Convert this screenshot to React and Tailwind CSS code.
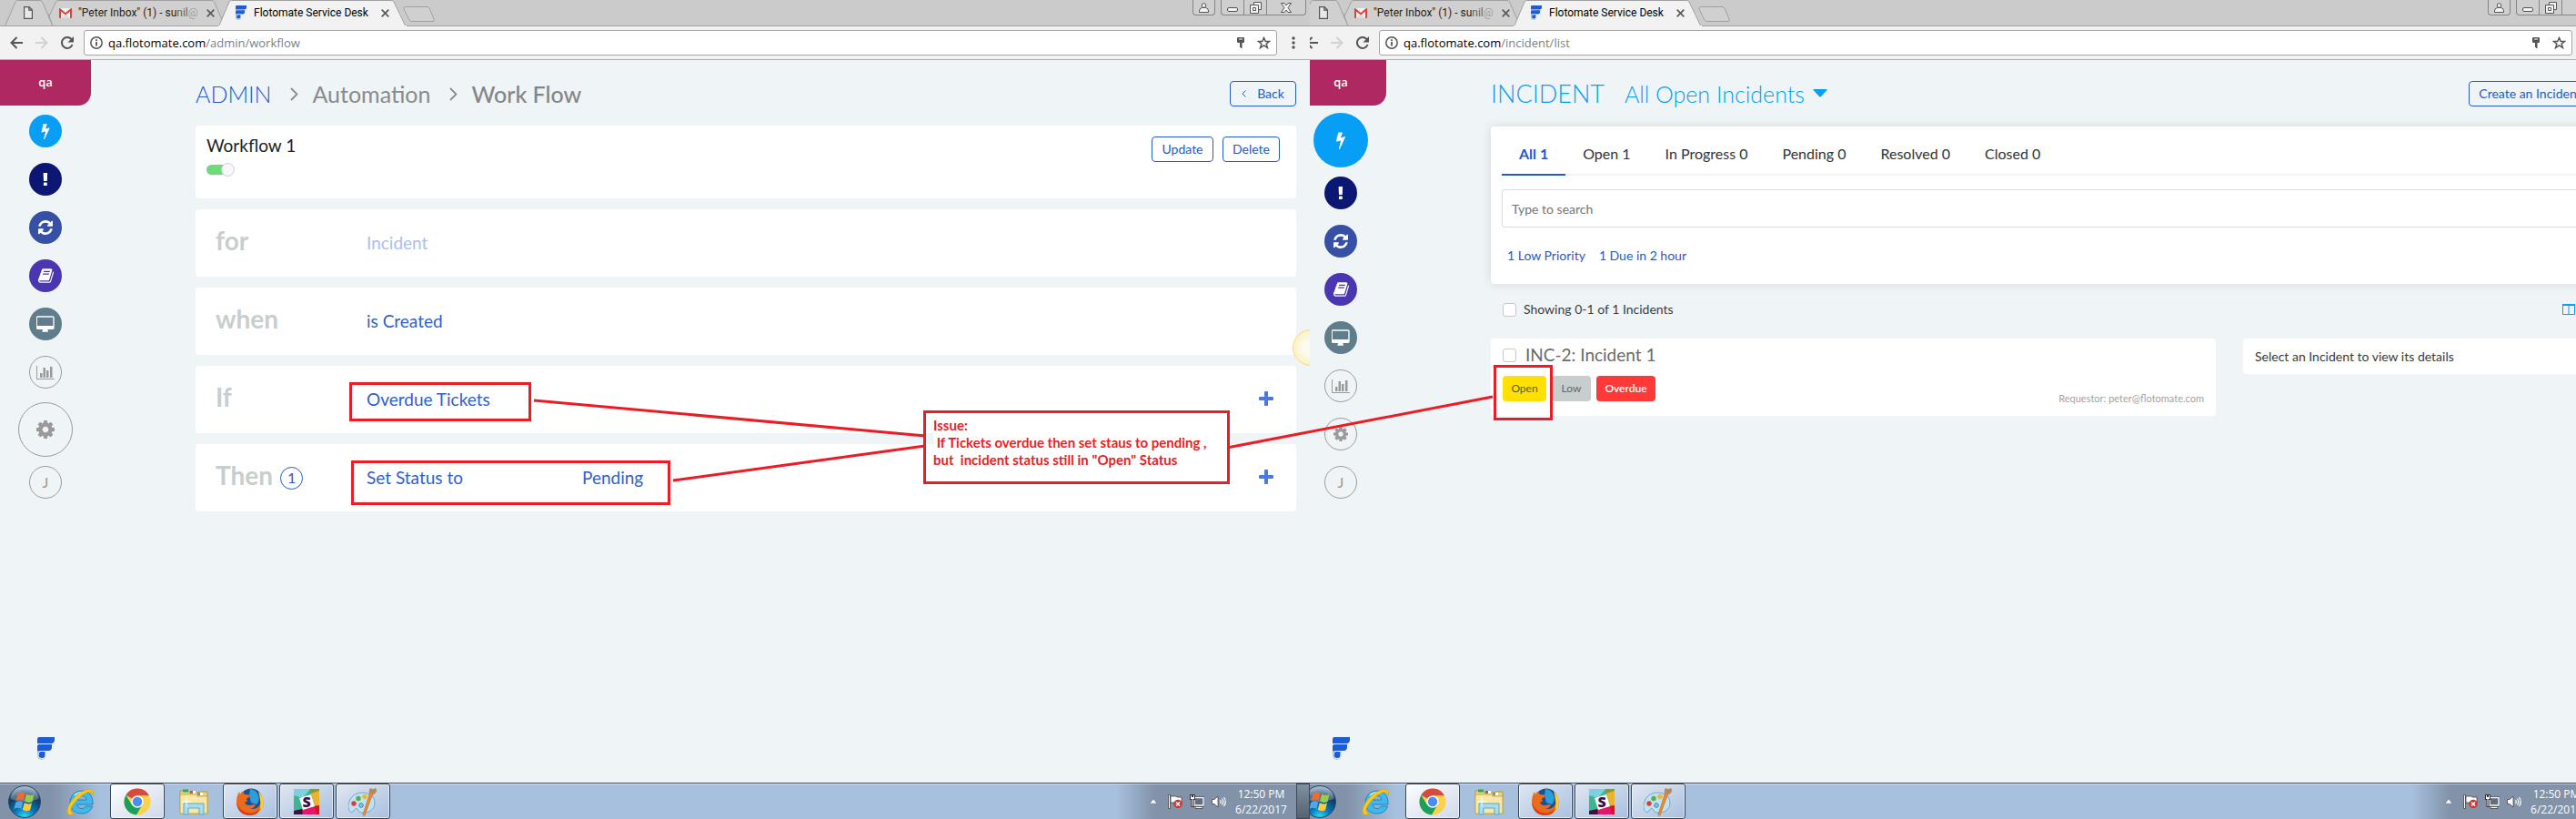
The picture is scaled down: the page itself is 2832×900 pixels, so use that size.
import React from "react";

const glyphs = {
  bolt: {
    box: "0 0 896 1792",
    d: "M885 566q18 20 7 44l-540 1157q-13 25-42 25-4 0-14-2-17-5-25.5-19t-4.5-30l197-808-406 101q-4 1-12 1-18 0-31-11-18-15-13-39l201-825q4-16 14.5-26t24.5-10h328q19 0 32 12.5t13 29.5q0 8-5 18l-171 463 396-98q8-2 12-2 19 0 34 15z",
  },
  alert: {
    box: "0 0 640 1792",
    d: "M448 1312v224q0 26-19 45t-45 19h-256q-26 0-45-19t-19-45v-224q0-26 19-45t45-19h256q26 0 45 19t19 45zm30-1056l-28 768q-1 26-20.500 45t-45.500 19h-256q-26 0-45.500-19t-20.500-45l-28-768q-1-26 17.500-45t44.500-19h320q26 0 44.500 19t17.500 45z",
  },
  refresh: {
    box: "0 128 1536 1536",
    d: "M1511 1056q0 5-1 7-64 268-268 434.5t-478 166.5q-146 0-282.500-55t-243.500-157l-129 129q-19 19-45 19t-45-19-19-45v-448q0-26 19-45t45-19h448q26 0 45 19t19 45-19 45l-137 137q71 66 161 102t187 36q134 0 250-65t186-179q11-17 53-117 8-23 30-23h192q13 0 22.500 9.500t9.500 22.500zm25-800v448q0 26-19 45t-45 19h-448q-26 0-45-19t-19-45 19-45l138-138q-148-137-349-137-134 0-250 65t-186 179q-11 17-53 117-8 23-30 23h-199q-13 0-22.500-9.500t-9.500-22.500v-7q65-268 270-434.500t480-166.500q146 0 284 55.500t245 156.500l130-129q19-19 45-19t45 19 19 45z",
  },
  book: {
    box: "0 128 1664 1536",
    d: "M1639 478q40 57 18 129l-275 906q-19 64-76.500 107.500t-122.500 43.500h-923q-77 0-148.500-53.500t-99.500-131.500q-24-67-2-127 0-4 3-27t4-37q1-8-3-21.500t-3-19.500q2-11 8-21t16.500-23.500 16.500-23.500q23-38 45-91.500t30-91.500q3-10 .5-30t-.5-28q3-11 17-28t17-23q21-36 42-92t25-90q1-9-2.500-32t.5-28q4-13 22-30.500t22-22.500q19-26 42.500-84.500t27.500-96.500q1-8-3-25.500t-2-26.500q2-8 9-18t18-23 17-21q8-12 16.500-30.500t15-35 16-36 19.500-32 26.500-23.500 36-11.500 47.500 5.500l-1 3q38-9 51-9h761q74 0 114 56t18 130l-274 906q-36 119-71.500 153.500t-128.500 34.500h-869q-27 0-38 15-11 16-1 43 24 70 144 70h923q29 0 56-15.500t35-41.500l300-987q7-22 5-57 38 15 59 43zm-1064 2q-4 13 2 22.500t20 9.500h608q13 0 25.500-9.500t16.500-22.500l21-64q4-13-2-22.500t-20-9.500h-608q-13 0-25.500 9.500t-16.500 22.500zm-83 256q-4 13 2 22.500t20 9.500h608q13 0 25.500-9.500t16.500-22.500l21-64q4-13-2-22.500t-20-9.500h-608q-13 0-25.500 9.500t-16.500 22.500z",
  },
  desktop: {
    box: "-32 0 1920 1664",
    d: "M1728 992v-832q0-13-9.500-22.500t-22.500-9.500h-1600q-13 0-22.500 9.500t-9.500 22.500v832q0 13 9.500 22.500t22.500 9.500h1600q13 0 22.500-9.500t9.500-22.500zm128-832v1088q0 66-47 113t-113 47h-544q0 37 16 77.500t32 71 16 43.500q0 26-19 45t-45 19h-512q-26 0-45-19t-19-45q0-14 16-44t32-70 16-78h-544q-66 0-113-47t-47-113v-1088q0-66 47-113t113-47h1600q66 0 113 47t47 113z",
  },
  chart: {
    box: "0 0 20 15",
    d: "M0 0h1v14h19v1H0zM4 8h2.500v5H4zM7.500 2H10v11H7.500zM11 5h2.500v8H11zM15 1h2.500v12H15z",
  },
  gear: {
    box: "0 128 1536 1536",
    d: "M1024 896q0-106-75-181t-181-75-181 75-75 181 75 181 181 75 181-75 75-181zm512-109v222q0 12-8 23t-20 13l-185 28q-19 54-39 91 35 50 107 138 10 12 10 25t-9 23q-27 37-99 108t-94 71q-12 0-26-9l-138-108q-44 23-91 38-16 136-29 186-7 28-36 28h-222q-14 0-24.500-8.500t-11.500-21.500l-28-184q-49-16-90-37l-141 107q-10 9-25 9-14 0-25-11-126-114-165-168-7-10-7-23 0-12 8-23 15-21 51-66.500t54-70.500q-27-50-41-99l-183-27q-13-2-21-12.500t-8-23.500v-222q0-12 8-23t19-13l186-28q14-46 39-92-40-57-107-138-10-12-10-24 0-10 9-23 26-36 98.500-107.500t94.500-71.500q13 0 26 10l138 107q44-23 91-38 16-136 29-186 7-28 36-28h222q14 0 24.500 8.500t11.500 21.500l28 184q49 16 90 37l142-107q9-9 24-9 13 0 25 10 129 119 165 170 7 8 7 22 0 12-8 23-15 21-51 66.500t-54 70.500q26 50 41 98l183 28q13 2 21 12.500t8 23.500z",
  },
};

function Glyph({ name, className }) {
  const g = glyphs[name];
  return (
    <svg viewBox={g.box} fill="currentColor" className={className} aria-hidden="true">
      <path d={g.d} />
    </svg>
  );
}

const Gmail = () => (
  <svg viewBox="0 0 14 11" className="h-[11px] w-[14px] shrink-0">
    <path d="M1 0h12v11H1z" fill="#f1f1f1" />
    <path d="M2 11l5-5 5 5z" fill="#dcdcdc" />
    <path d="M0 1q0-1 1-1l6 5 6-5q1 0 1 1v9q0 1-1 1h-1V3.500L7 7.500 2 3.500V11H1q-1 0-1-1z" fill="#db4437" />
  </svg>
);

const FlotoMark = ({ className }) => (
  <svg viewBox="0 0 19 25" className={className}>
    <path d="M2 0h17v3q0 4-4 4H0V2q0-2 2-2z" fill="#1f5bd6" />
    <path d="M2 8h14v3q0 4-4 4H0v-5q0-2 2-2z" fill="#1f5bd6" />
    <path d="M0 15h9.500v5a4.700 4.700 0 0 1-9.500 0z" fill="#8fadea" />
    <path d="M5.500 15.500h3.500v4.500a4 4 0 1 1-3.500-4.500z" fill="#1f5bd6" stroke="#fff" strokeWidth="1" />
  </svg>
);

const Cross = () => (
  <svg viewBox="0 0 9 9" className="size-[9px]" stroke="#5a5a5a" strokeWidth="1.700">
    <path d="M.7.7l7.600 7.600M8.300.7L.7 8.300" />
  </svg>
);

function TabStrip() {
  return (
    <div className="relative flex h-[29px] items-stretch justify-between border-b border-[#a0a0a0] bg-[#cbcbcb]">
      <svg viewBox="0 0 480 29" className="absolute top-0 left-0 h-[29px] w-[480px]" strokeWidth="1">
        <path d="M5.500 28.500L17 2q1-1.500 2.500-1.500H44q1.500 0 2.500 1.500L58 28.500z" fill="#d0d0d0" stroke="#a0a0a0" />
        <path d="M53 15L58 28.500H247L235.500 2Q234.500.5 233 .5H64q-1.500 0-2.500 1.500L53 20" fill="#d0d0d0" stroke="#a0a0a0" />
        <path d="M240.500 29L252 2q1-1.500 2.500-1.500H430q2 0 3 1.500L446 29z" fill="#f2f2f2" stroke="#a0a0a0" />
        <path d="M240 28.500h207" stroke="#f2f2f2" />
        <path d="M446 7.500h23q2 0 3 1.500l5 12q1 2.500-1 2.500h-23q-2 0-3-1.500l-6-12q-1-2.500 2-2.500z" fill="#d0d0d0" stroke="#a0a0a0" />
      </svg>
      <div className="relative flex items-center font-[Roboto,sans-serif] text-[12px] leading-4 text-[#222]">
        <button aria-label="New document tab" className="w-[65px] pl-[26px]">
          <svg viewBox="0 0 10 14" className="h-[14px] w-[10px]" fill="#e8e8e8" stroke="#555" strokeWidth="1.200">
            <path d="M.6.6h5.400l3.400 3.400v9.400H.6zM5.800.8V4.200h3.400" />
          </svg>
        </button>
        <div className="flex w-[194px] items-center">
          <Gmail />
          <span className="ml-[7px] w-[133px] whitespace-nowrap">
            "Peter Inbox" (1) - su<span className="text-[#666]">nil</span>
            <span className="text-[#a0a0a0]">@</span>
          </span>
          <button aria-label="Close tab" className="ml-[8px]">
            <Cross />
          </button>
        </div>
        <div className="flex items-center">
          <FlotoMark className="h-[16px] w-[12px]" />
          <span className="ml-[8px] w-[133px] whitespace-nowrap text-black">Flotomate Service Desk</span>
          <button aria-label="Close tab" className="ml-[7px]">
            <Cross />
          </button>
        </div>
      </div>
      <div className="flex h-[17px] gap-[6px] pr-1">
        <button aria-label="Profile" className="flex h-[17px] w-[25px] items-center justify-center rounded-b border border-t-0 border-[#858585] bg-[#cfcfcf]">
          <svg viewBox="0 0 11 11" className="size-[11px]" fill="#f4f4f4" stroke="#555" strokeWidth="1">
            <circle cx="5.500" cy="3" r="2.300" />
            <path d="M.5 10.500V9q0-3 3-3.500h4q3 .5 3 3.500v1.500z" />
          </svg>
        </button>
        <div className="flex h-[17px] divide-x divide-[#858585] rounded-b border border-t-0 border-[#858585] bg-[#cfcfcf]">
          <button aria-label="Minimize" className="flex w-[25px] items-end justify-center pb-[3px]">
            <span className="h-[5px] w-[12px] rounded-xs border border-[#555] bg-[#f4f4f4]" />
          </button>
          <button aria-label="Restore" className="flex w-[25px] items-center justify-center">
            <svg viewBox="0 0 13 13" className="size-[13px]" fill="#f4f4f4" stroke="#555">
              <path d="M4.500.5h8v8h-8z" />
              <path d="M.5 3.500h9v9h-9zM3.500 6.500h3v3h-3z" />
            </svg>
          </button>
          <button aria-label="Close" className="flex w-[42px] items-center justify-center">
            <svg viewBox="0 0 12 11" className="h-[11px] w-[12px]" fill="#f4f4f4" stroke="#555" strokeWidth="1">
              <path d="M.5.5H4l2 2.500L8 .5h3.500L8 5.500l3.500 5H8L6 8l-2 2.500H.5l3.500-5z" />
            </svg>
          </button>
        </div>
      </div>
    </div>
  );
}

function AddressBar({ path }) {
  return (
    <div className="flex h-[37px] items-center border-b border-[#b0aeb0] bg-[#f2f2f2] pr-4 pl-[11px]">
      <button aria-label="Back">
        <svg viewBox="0 0 14 14" className="size-[14px]" fill="none" stroke="#555" strokeWidth="2">
          <path d="M14 7H1.500M7.500 1l-6 6 6 6" />
        </svg>
      </button>
      <button aria-label="Forward" className="ml-[14px]">
        <svg viewBox="0 0 14 14" className="size-[14px]" fill="none" stroke="#d2d2d2" strokeWidth="2">
          <path d="M0 7h12.500M6.500 1l6 6-6 6" />
        </svg>
      </button>
      <button aria-label="Reload" className="ml-[14px]">
        <svg viewBox="0 0 14 14" className="size-[14px]" fill="none" stroke="#555" strokeWidth="2">
          <path d="M12.600 9A6 6 0 1 1 11.500 3" />
          <path d="M14 0v6.500H7.500z" fill="#555" stroke="none" />
        </svg>
      </button>
      <div className="ml-[11px] flex h-[28px] flex-1 items-center rounded-[3px] border border-[#a6a6a6] bg-white pr-[6px] pl-[6px]">
        <svg viewBox="0 0 14 14" className="size-[14px]" fill="none" stroke="#555" strokeWidth="1.500">
          <circle cx="7" cy="7" r="6.200" />
          <path d="M7 6v4.500M7 3.200v1.800" strokeWidth="1.800" />
        </svg>
        <span className="ml-[6px] flex-1 font-['Open_Sans',sans-serif] text-[13px] leading-5 text-black">
          qa.flotomate.com<span className="text-[#808080]">{path}</span>
        </span>
        <svg viewBox="0 0 8 13" className="h-[13px] w-[8px]" fill="#555">
          <path d="M0 1q0-1 1-1h6q1 0 1 1v4q0 1-1 1H5.500v6H4v-1H3V6H1Q0 6 0 5zM2 1.500v1h4v-1z" />
        </svg>
        <button aria-label="Bookmark" className="ml-[14px]">
          <svg viewBox="0 0 15 14" className="h-[14px] w-[15px]" fill="none" stroke="#555" strokeWidth="1.500">
            <path d="M7.500 1.500l1.700 4h4.300l-3.400 2.700 1.300 4.300-3.900-2.600-3.900 2.600 1.300-4.300L1.500 5.500h4.300z" />
          </svg>
        </button>
      </div>
      <button aria-label="Menu" className="ml-4">
        <svg viewBox="0 0 4 14" className="h-[14px] w-[4px]" fill="#555">
          <circle cx="2" cy="2" r="1.700" />
          <circle cx="2" cy="7" r="1.700" />
          <circle cx="2" cy="12" r="1.700" />
        </svg>
      </button>
    </div>
  );
}

const navItems = [
  { name: "bolt", label: "Requests", tone: "bg-[#069ff5] text-white", icon: "h-[18px] w-[10px]" },
  { name: "alert", label: "Problems", tone: "bg-[#0b1772] text-white", icon: "h-[18px] w-[7px]" },
  { name: "refresh", label: "Changes", tone: "bg-[#3550a5] text-white", icon: "size-[16px]" },
  { name: "book", label: "Knowledge", tone: "bg-[#4b36b1] text-white", icon: "h-[16px] w-[17px]" },
  { name: "desktop", label: "Assets", tone: "bg-[#607d8b] text-white", icon: "h-[18px] w-[20px]" },
  { name: "chart", label: "Reports", tone: "border border-[#9a9a9a] text-[#9a9a9a]", icon: "h-[15px] w-[20px]" },
  { name: "gear", label: "Admin", tone: "border border-[#9a9a9a] text-[#9a9a9a]", icon: "size-[16px]" },
];

function Sidebar({ active }) {
  return (
    <aside className="flex w-[100px] shrink-0 flex-col items-center pb-[25px]">
      <div className="flex h-[50px] w-full items-center justify-center rounded-br-[14px] bg-[#af2861] font-['Open_Sans',sans-serif] text-[13px] font-semibold text-white">
        qa
      </div>
      <nav className="flex flex-col items-center pt-[10px]">
        {navItems.map((item) => (
          <button
            key={item.name}
            aria-label={item.label}
            className={`flex items-center justify-center rounded-full ${item.tone} ${
              item.name === active ? "-mt-[2px] mb-[10px] size-[60px]" : "mb-[17px] size-[36px]"
            }`}
          >
            <Glyph name={item.name} className={item.name === active ? "h-[20px] w-[20px]" : item.icon} />
          </button>
        ))}
        <button className="flex size-[36px] items-center justify-center rounded-full border border-[#9a9a9a] text-[16px] text-[#9a9a9a]">
          J
        </button>
      </nav>
      <FlotoMark className="mt-auto h-[25px] w-[19px]" />
    </aside>
  );
}

function OutlineButton({ children, className = "" }) {
  return (
    <button className={`flex h-7 items-center justify-center rounded border border-[#2459d0] text-[14px] leading-5 whitespace-nowrap text-[#2459d0] ${className}`}>
      {children}
    </button>
  );
}

const Chevron = () => (
  <svg viewBox="0 0 9 15" className="mr-[15px] ml-[21px] h-[15px] w-[9px]" fill="none" stroke="currentColor" strokeWidth="1.800">
    <path d="M1 1l6.500 6.500L1 14" />
  </svg>
);

const Plus = () => (
  <button aria-label="Add" className="mr-[25px] mb-[2px] ml-auto text-[#4a7bdc]">
    <svg viewBox="0 0 16 16" className="size-[16px]" fill="currentColor">
      <path d="M6 1q0-1 1-1h2q1 0 1 1v5h5q1 0 1 1v2q0 1-1 1h-5v5q0 1-1 1H7q-1 0-1-1v-5H1Q0 10 0 9V7q0-1 1-1h5z" />
    </svg>
  </button>
);

function RuleCard({ title, children, badge, add }) {
  return (
    <section className="flex h-[74px] items-center rounded bg-white pl-[22px]">
      <div className="flex w-[166px] items-center gap-[8px]">
        <h2 className="pb-[7px] text-[28px] leading-8 font-bold text-[#c8cece]">{title}</h2>
        {badge && (
          <span className="flex size-[25px] items-center justify-center rounded-full border border-[#2459d0] text-[16px] text-[#2459d0]">
            {badge}
          </span>
        )}
      </div>
      <div className="flex items-center text-[19px] leading-6 text-[#2f5fd0]">{children}</div>
      {add && <Plus />}
    </section>
  );
}

function WorkflowPage() {
  return (
    <main className="flex-1 pr-[15px] pl-[115px]">
      <header className="flex h-[72px] items-center justify-between pt-[2px]">
        <nav aria-label="Breadcrumb" className="flex items-center text-[25px] leading-8 text-[#8b8b8b]">
          <a href="#admin" className="font-light text-[#2459d0]">ADMIN</a>
          <Chevron />
          <a href="#automation">Automation</a>
          <Chevron />
          <span className="font-medium text-[#858585]">Work Flow</span>
        </nav>
        <OutlineButton className="w-[73px] gap-[12px]">
          <svg viewBox="0 0 5 8" className="h-[8px] w-[5px]" fill="none" stroke="currentColor">
            <path d="M4.500.5L1 4l3.500 3.500" />
          </svg>
          Back
        </OutlineButton>
      </header>
      <div className="flex flex-col gap-3">
        <section className="flex h-[80px] items-start justify-between rounded bg-white px-[12px] pt-[12px]">
          <div className="-mt-[2px] flex flex-col gap-[7px]">
            <h1 className="text-[19px] leading-6 text-[#222]">Workflow 1</h1>
            <input
              type="checkbox"
              role="switch"
              aria-label="Workflow enabled"
              defaultChecked
              className="relative h-[15px] w-[31px] appearance-none before:absolute before:top-[2px] before:left-0 before:h-[11px] before:w-[26px] before:rounded-full before:bg-[#6bdc79] after:absolute after:top-0 after:right-0 after:size-[15px] after:rounded-full after:border after:border-[#ccd0d4] after:bg-[#f8f8f8]"
            />
          </div>
          <div className="flex gap-[10px] pr-[6px]">
            <OutlineButton className="w-[68px]">Update</OutlineButton>
            <OutlineButton className="w-[63px]">Delete</OutlineButton>
          </div>
        </section>
        <RuleCard title="for">
          <span className="text-[#a9bff0]">Incident</span>
        </RuleCard>
        <RuleCard title="when">
          <button>is Created</button>
        </RuleCard>
        <RuleCard title="If" add>
          <button>Overdue Tickets</button>
        </RuleCard>
        <RuleCard title="Then" badge="1" add>
          <button className="w-[237px] text-left">Set Status to</button>
          <button>Pending</button>
        </RuleCard>
      </div>
    </main>
  );
}

const statusTabs = ["All 1", "Open 1", "In Progress 0", "Pending 0", "Resolved 0", "Closed 0"];

const Tick = ({ label }) => (
  <input
    type="checkbox"
    aria-label={label}
    className="size-[15px] shrink-0 appearance-none rounded-[3px] border border-[#c8c8c8] bg-white checked:bg-[#2459d0]"
  />
);

function IncidentPage() {
  return (
    <main className="min-w-0 flex-1 pr-[15px] pl-[115px]">
      <header className="flex h-[73px] items-center justify-between">
        <div className="flex items-center gap-[22px] leading-8 font-light text-[#069ff5]">
          <h1 className="text-[27px]">INCIDENT</h1>
          <div className="flex items-center gap-[8px]">
            <select aria-label="Incident view" className="appearance-none text-[25px] font-light">
              <option>All Open Incidents</option>
            </select>
            <svg viewBox="0 0 16 9" className="h-[9px] w-[16px]" fill="currentColor">
              <path d="M1 0h14q1 0 .5 1L9 8q-1 1-2 0L.5 1Q0 0 1 0z" />
            </svg>
          </div>
        </div>
        <OutlineButton className="w-[135px]">Create an Incident</OutlineButton>
      </header>
      <section className="rounded bg-white px-[12px] pb-[20px] shadow-[0_0_12px_rgba(0,0,0,0.12)]">
        <div role="tablist" className="flex border-b-2 border-[#eff4f7] text-[16px] leading-6 text-[#333]">
          {statusTabs.map((tab, i) => (
            <button
              key={tab}
              role="tab"
              aria-selected={i === 0}
              className={
                i === 0
                  ? "-mb-[2px] border-b-2 border-[#2459d0] px-[19px] pt-[18px] pb-[10px] font-bold text-[#2459d0]"
                  : "px-[19px] pt-[18px] pb-[10px]"
              }
            >
              {tab}
            </button>
          ))}
        </div>
        <input
          type="text"
          aria-label="Search incidents"
          placeholder="Type to search"
          className="mt-[15px] block h-[42px] w-full rounded-[3px] border border-[#dcdcdc] px-[10px] text-[14px] placeholder:text-[#757575]"
        />
        <div className="mt-[19px] flex gap-[15px] pl-[6px] text-[14px] leading-[23px] text-[#2459d0]">
          <a href="#low">1 Low Priority</a>
          <a href="#due">1 Due in 2 hour</a>
        </div>
      </section>
      <div className="flex h-[60px] items-center justify-between pr-[18px] pb-[4px] pl-[13px]">
        <label className="flex items-center gap-[8px] text-[14px] leading-5 text-[#3a3f42]">
          <Tick label="Select all incidents" />
          Showing 0-1 of 1 Incidents
        </label>
        <button aria-label="Split view">
          <svg viewBox="0 0 14 12" className="h-[12px] w-[14px]" fill="none" stroke="#069ff5">
            <path d="M.5.5h13v11H.5zM7 1v10" />
            <path d="M0 1h14" strokeWidth="2" />
          </svg>
        </button>
      </div>
      <div className="grid grid-cols-[797fr_383fr] items-start gap-[30px]">
        <article className="flex h-[85px] justify-between rounded bg-white px-[13px] pt-[6px]">
          <div className="flex flex-col gap-[11px]">
            <div className="flex items-center gap-[10px]">
              <Tick label="Select incident INC-2" />
              <h2 className="text-[19px] leading-6 text-[#6a6a6a]">INC-2: Incident 1</h2>
            </div>
            <div className="flex gap-[6px] text-[12px]">
              <button className="h-7 w-[48px] rounded bg-[#ffe000] text-[#5d5a35]">Open</button>
              <button className="h-7 w-[43px] rounded bg-[#c8cece] text-[#666]">Low</button>
              <button className="h-7 w-[65px] rounded bg-[#ff3838] font-semibold text-white">Overdue</button>
            </div>
          </div>
          <p className="self-end pb-[9px] text-[11px] leading-5 text-[#a2a2a2]">Requestor: peter@flotomate.com</p>
        </article>
        <aside className="flex h-[39px] items-center rounded bg-white px-[13px] text-[14px] text-[#3a3a3a]">
          Select an Incident to view its details
        </aside>
      </div>
    </main>
  );
}

function StartOrb() {
  return (
    <svg viewBox="0 0 36 36" className="size-9">
      <defs>
        <radialGradient id="orb" cx=".5" cy="1" r=".95">
          <stop offset="0" stopColor="#2fe4ff" />
          <stop offset=".35" stopColor="#0877b8" />
          <stop offset=".75" stopColor="#10395e" />
          <stop offset="1" stopColor="#7fa0b8" />
        </radialGradient>
      </defs>
      <circle cx="18" cy="18" r="17.400" fill="url(#orb)" stroke="#24435e" />
      <path d="M3 15a15 14 0 0 1 30 0q-15 6-30 0z" fill="#fff" opacity=".28" />
      <path d="M10.500 9q3.500-2.500 8 0l-1.800 8q-4-2.500-8 0z" fill="#ef6a35" />
      <path d="M20 9.500q4 2.500 8.500.5l-2 8q-4.500 2-8.300-.5z" fill="#9bcb4c" />
      <path d="M8.300 18.500q4-2.500 8 0l-2 7.500q-3.500-2.500-8 0z" fill="#51a7e6" />
      <path d="M17.800 19q4 2.500 8.200.5l-2 7.800q-4.200 2-8.200-.5z" fill="#fdcb39" />
    </svg>
  );
}

const ExplorerE = () => (
  <svg viewBox="0 0 32 32" className="size-8">
    <path d="M17 4C9 4 4 10 4 17s5 12 13 12c6 0 10-3 11.500-8H21c-1 2-2.300 2.500-4 2.500-3 0-5-1.700-5.200-4.500H29c.5-9-4-15-12-15zm-5 10c.5-3 2.500-4.500 5-4.500s4.500 1.500 4.800 4.500z" fill="#3fb9ec" stroke="#1f86c4" />
    <path d="M9 9q4-4 10-3.500" fill="none" stroke="#b9f0ff" strokeWidth="1.500" />
    <path d="M29.500 8C31.500 1 23 1 14 7 4 14-1 25 2 29.500c1.500 2 5 .5 7-1-5 .5-6-4 0-11.500C16 8 29 1 28 8z" fill="#fbc917" stroke="#d79b0a" strokeWidth=".6" />
  </svg>
);

const ChromeIcon = () => (
  <svg viewBox="0 0 30 30" className="size-[30px]">
    <circle cx="15" cy="15" r="14.600" fill="#fdd14f" />
    <path d="M2.400 7.700A14.600 14.600 0 0 0 14 29.600l6.500-11.300L15 15 9 18.500z" fill="#1c9f5c" />
    <path d="M15 15L2.400 7.700A14.600 14.600 0 0 1 28 8.300H15z" fill="#d84a3f" />
    <circle cx="15" cy="15" r="6.700" fill="#fff" />
    <circle cx="15" cy="15" r="5.200" fill="#4b8bf5" />
  </svg>
);

const FolderIcon = () => (
  <svg viewBox="0 0 32 30" className="h-[30px] w-[32px]">
    <path d="M1 3h8l2 2h10l1-1h9v24H1z" fill="#edd27a" stroke="#b89a45" />
    <path d="M4 1.500h6v3H4z" fill="#22b14c" />
    <path d="M12 3h6v3h-6z" fill="#fff" />
    <path d="M12 3h3v3h-3z" fill="#e04a2f" />
    <path d="M20 5h6v3h-6z" fill="#fff" />
    <path d="M20 5h3v3h-3z" fill="#3aa2e8" />
    <path d="M1 7h17l2 2h11v19H1z" fill="#f8e8a4" stroke="#c8a951" />
    <path d="M5 17h22v12h-5v-7H10v7H5z" fill="#a8dcf2" stroke="#5ba7cc" />
    <path d="M8 10v10M3 15h10" stroke="#fff" />
  </svg>
);

const FirefoxIcon = () => (
  <svg viewBox="0 0 30 30" className="size-[30px]">
    <circle cx="16" cy="13" r="12.500" fill="#1b4f93" />
    <path d="M15 1q7 1 9 7t-2 10l-6-2-2-8z" fill="#2a9fdb" />
    <path d="M24 4q6 5 5.700 13A14.500 14.500 0 0 1 15 30C6 30 0 23 0 15c0-4 1-8 3-11l1 3q1-3 4-4-1 3 1 4l5 .5q2 1-1 3l-2 1 1 3-3 1q2 5 8 3 2-1 4 0-2 4-6 4 8 2 11-5 2-6-1-13z" fill="#ea6a1e" />
    <path d="M24 4q6 5 5.700 13-.7 7-6.700 11 5-8 3-15-.5-5-2-9z" fill="#fbd13a" />
    <path d="M0 15q3 10 12 12t15-6q-3 9-12 9Q1 30 0 15z" fill="#d7401b" />
  </svg>
);

const SlackTile = () => (
  <span className="relative flex size-[28px] items-center justify-center">
    <svg viewBox="0 0 28 28" className="absolute inset-0 size-[28px]">
      <path d="M0 0h28v28H0z" fill="#3cb690" />
      <path d="M0 0h18l-8 10L0 7z" fill="#7fd0df" />
      <path d="M18 0h10v3l-9 5z" fill="#8a9a2a" />
      <path d="M19 5l9-3v17l-5-1z" fill="#ecb32d" />
      <path d="M8 22l20-4v10H10z" fill="#e3166a" />
      <path d="M23 19l5-1v10h-3z" fill="#d0142a" />
      <path d="M0 24l9-2 1 6H0z" fill="#3a1140" />
      <path d="M6 10l13-4 4 13-13 4z" fill="#fff" />
    </svg>
    <span className="relative font-['Open_Sans',sans-serif] text-[16px] leading-5 font-extrabold text-[#3a1140]">S</span>
  </span>
);

const PaintIcon = () => (
  <svg viewBox="0 0 32 32" className="size-8">
    <path d="M15 6C6 6 0 13 0 21c0 6 4 8 6 5 2-4 4-3 5 0 2 4 18 3 18-9 0-7-6-11-14-11z" fill="#bfe3f3" stroke="#6fa7c8" />
    <circle cx="6" cy="18" r="2.700" fill="#dc3d32" />
    <circle cx="11" cy="12.500" r="2.700" fill="#53b148" />
    <circle cx="18" cy="10.500" r="2.700" fill="#f1b52e" />
    <circle cx="14" cy="20" r="2.300" fill="#8cc6e6" stroke="#3f81ab" />
    <path d="M24 5l3 2-9 24q-2 1-2-1z" fill="#ee8a2d" stroke="#b65f14" strokeWidth=".5" />
    <path d="M24 1q3 2 6 0 3 4-2 7l-5-1q-1-3 1-6z" fill="#b58a63" />
  </svg>
);

const TaskButton = ({ label, bright, children }) => (
  <button
    aria-label={label}
    className={`mr-[2px] flex h-[39px] w-[60px] items-center justify-center rounded-[3px] border border-[#39465a] bg-linear-to-br shadow-[inset_0_0_0_1px_rgba(255,255,255,0.6)] ${
      bright ? "from-[#fdfeff] to-[#cdd9ea]" : "from-[#dfe7f2] to-[#a9c0df]"
    }`}
  >
    {children}
  </button>
);

function Taskbar() {
  return (
    <footer className="flex h-[40px] items-center justify-between border-t border-[#454d5c] bg-[linear-gradient(90deg,#8192a9_0,#8192a9_56px,#a6c0dd_110px,#a6c0dd_calc(100%-212px),#8192a9_calc(100%-170px),#8192a9_100%)] shadow-[inset_0_1px_0_rgba(255,255,255,0.5)]">
      <div className="flex items-center">
        <button aria-label="Start" className="mr-[28px] ml-[9px]">
          <StartOrb />
        </button>
        <button aria-label="Internet Explorer" className="mr-[16px]">
          <ExplorerE />
        </button>
        <TaskButton label="Chrome" bright>
          <ChromeIcon />
        </TaskButton>
        <button aria-label="File Explorer" className="mr-[16px] ml-[14px]">
          <FolderIcon />
        </button>
        <TaskButton label="Firefox">
          <FirefoxIcon />
        </TaskButton>
        <TaskButton label="Slack">
          <SlackTile />
        </TaskButton>
        <TaskButton label="Paint">
          <PaintIcon />
        </TaskButton>
      </div>
      <div className="flex h-full items-center">
        <svg viewBox="0 0 8 5" className="h-[5px] w-[8px]" fill="#fff" stroke="#5c6878" strokeWidth=".5">
          <path d="M0 5l4-5 4 5z" />
        </svg>
        <svg viewBox="0 0 16 16" className="ml-[12px] size-4">
          <path d="M.5.5h2v15h-2z" fill="#fff" stroke="#333" strokeWidth=".7" />
          <path d="M3 2h6l1 1h5v7H9L8 9H3z" fill="#fff" stroke="#333" strokeWidth=".7" />
          <circle cx="11" cy="10.500" r="4.700" fill="#d9302a" />
          <path d="M9 8.500l4 4M13 8.500l-4 4" stroke="#fff" strokeWidth="1.600" />
        </svg>
        <svg viewBox="0 0 16 16" className="ml-[8px] size-4" fill="none">
          <path d="M5 3.500h10v8.500H5zM6 14.500h8" stroke="#333" strokeWidth="3" />
          <path d="M5 3.500h10v8.500H5z" fill="#5f6d80" stroke="#fff" strokeWidth="1.400" />
          <path d="M6.500 14.500h7" stroke="#fff" strokeWidth="1.400" />
          <path d="M0 0h6v6H4.500v8h-3V6H0z" fill="#333" />
          <path d="M1 1h1v2h2V1h1v4H3.500v8h-1V5H1z" fill="#fff" />
        </svg>
        <svg viewBox="0 0 16 14" className="ml-[8px] h-[14px] w-[16px]" fill="none">
          <path d="M.5 4.500h2.500L7 1v12L3 9.500H.5z" fill="#fff" stroke="#333" strokeWidth=".7" />
          <path d="M9.500 5q1.500 2 0 4M11.500 3.500q2.500 3.500 0 7M13.500 2q3.500 5 0 10" stroke="#fff" strokeWidth="1.200" />
        </svg>
        <div className="w-[77px] text-center font-['Open_Sans',sans-serif] text-[12px] leading-[17px] text-white">
          <div>12:50 PM</div>
          <div>6/22/2017</div>
        </div>
        <button aria-label="Show desktop" className="h-full w-[15px] border border-[#3e4857] bg-linear-to-b from-[#8190a3] to-[#56616f]" />
      </div>
    </footer>
  );
}

function BrowserWindow({ path, active, children }) {
  return (
    <div className="flex min-h-screen flex-col bg-[#eff4f7]">
      <TabStrip />
      <AddressBar path={path} />
      <div className="flex flex-1">
        <Sidebar active={active} />
        {children}
      </div>
      <Taskbar />
    </div>
  );
}

function Annotations() {
  return (
    <div className="pointer-events-none absolute inset-0">
      <svg viewBox="0 0 2832 900" className="absolute top-0 left-0 h-[900px] w-[2832px]" stroke="#ed1c24" strokeWidth="3">
        <path d="M587 440L1017 479M740 528L1017 490M1349 492L1641 436" />
      </svg>
      <div className="absolute top-[420px] left-[384px] h-[43px] w-[200px] border-3 border-[#ed1c24]" />
      <div className="absolute top-[506px] left-[386px] h-[49px] w-[351px] border-3 border-[#ed1c24]" />
      <div className="absolute top-[401px] left-[1642px] h-[61px] w-[65px] border-3 border-[#ed1c24]" />
      <div className="absolute top-[451px] left-[1015px] h-[81px] w-[337px] border-3 border-[#ed1c24]">
        <p className="ml-[8px] h-full bg-white pt-[4px] text-[15px] leading-[19px] font-bold whitespace-pre text-[#ed1c24]">
          {'Issue:\n If Tickets overdue then set staus to pending ,\nbut  incident status still in "Open" Status'}
        </p>
      </div>
    </div>
  );
}

export default function App() {
  return (
    <div className="relative flex min-h-screen overflow-hidden font-[Lato,sans-serif]">
      <div className="relative min-w-0 flex-[1440] overflow-hidden">
        <BrowserWindow path="/admin/workflow" active="gear">
          <WorkflowPage />
        </BrowserWindow>
        <div className="absolute top-[362px] -right-[21px] size-[40px] rounded-full border border-[#f5d98a] bg-radial from-[#fbfbf0] from-30% to-[#fbeb9c]" />
      </div>
      <div className="min-w-0 flex-[1392] overflow-hidden">
        <div className="-mr-8 -ml-4">
          <BrowserWindow path="/incident/list" active="bolt">
            <IncidentPage />
          </BrowserWindow>
        </div>
      </div>
      <Annotations />
    </div>
  );
}
